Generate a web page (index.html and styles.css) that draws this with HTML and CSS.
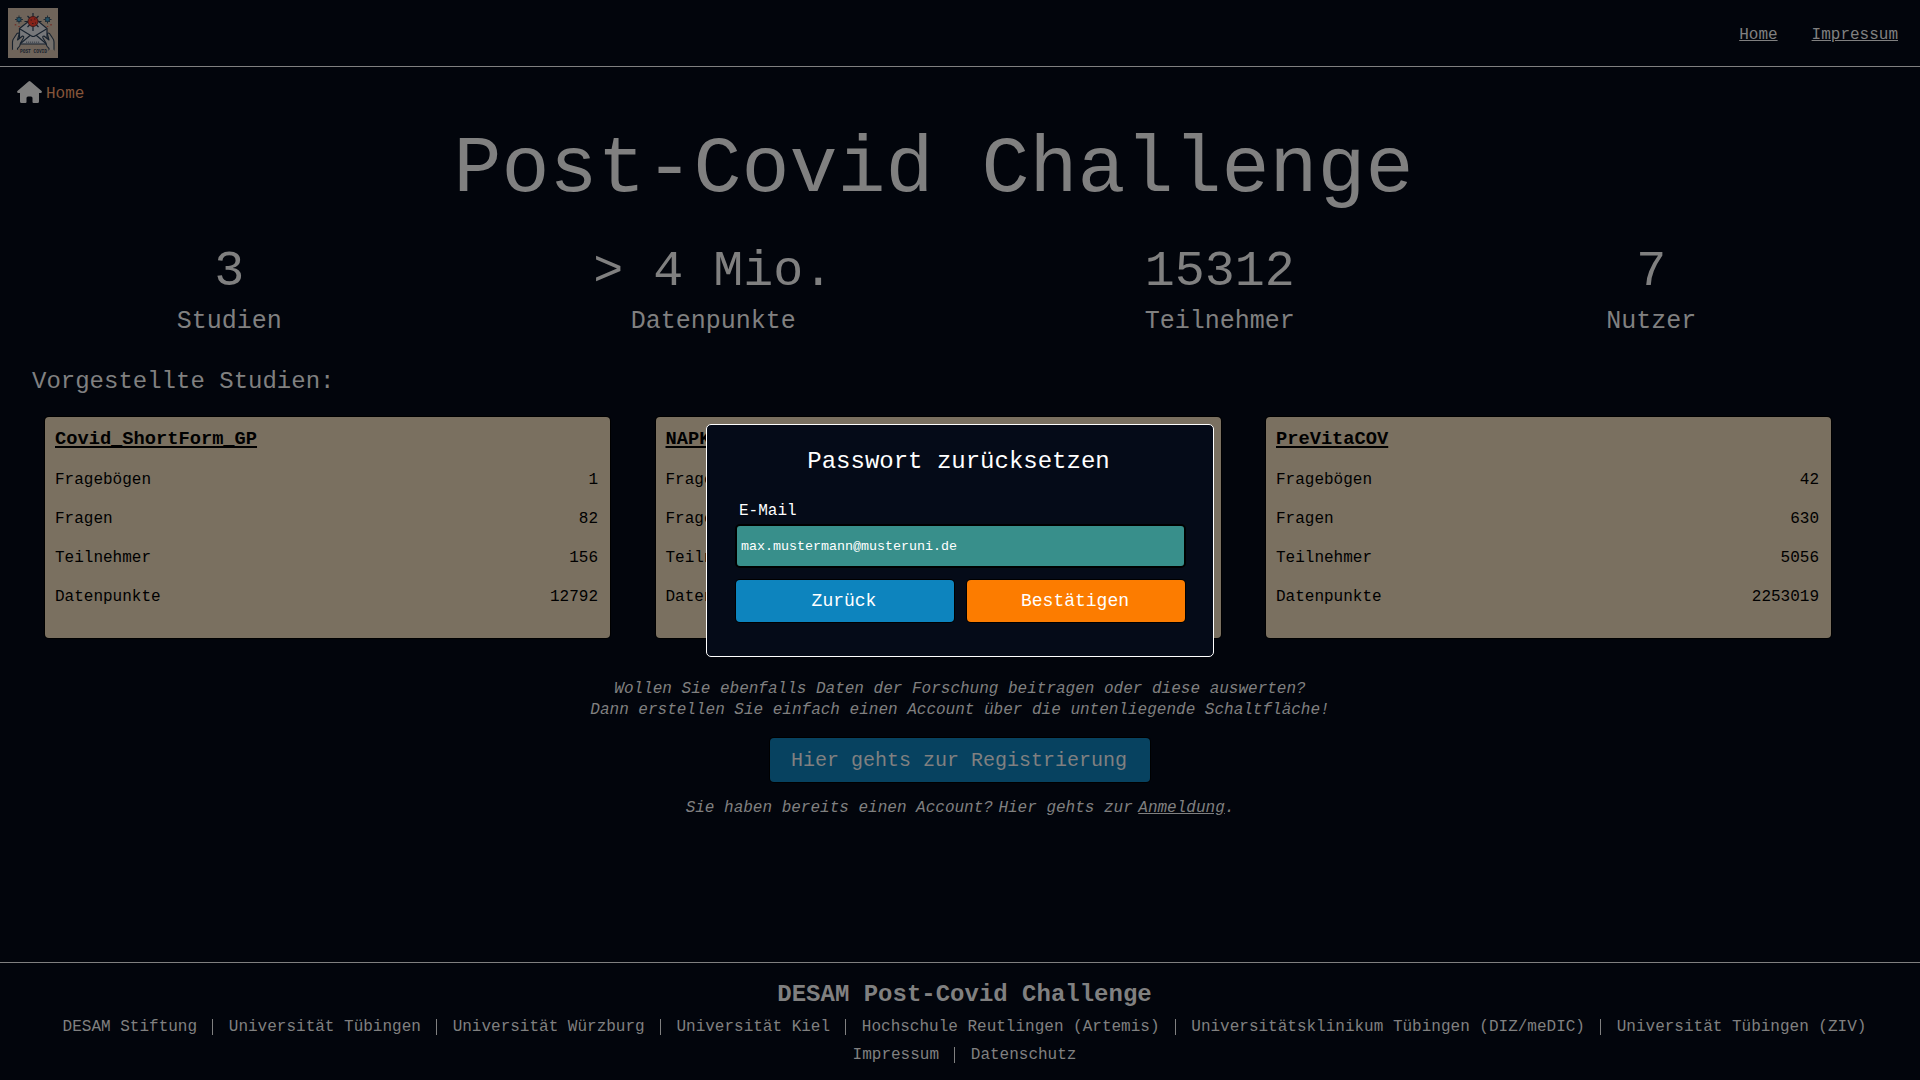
FILE: index.html
```html
<!DOCTYPE html>
<html lang="de">
<head>
<meta charset="utf-8">
<title>Post-Covid Challenge</title>
<link rel="stylesheet" href="styles.css">
</head>
<body>
<header class="topbar">
  <svg class="logo" viewBox="0 0 50 50" role="img" aria-label="Post Covid">
    <rect width="50" height="50" fill="#6f645a"/>
    <g stroke="#1b2833" stroke-width=".9" fill="#245064">
      <path d="M11 7.500v8M7 11.500h8M8.500 9l5 5M13.500 9l-5 5M39.500 7.500v8M35.500 11.500h8M37 9l5 5M42 9l-5 5"/>
      <circle cx="11" cy="11.500" r="2.200"/><circle cx="39.500" cy="11.500" r="2.200"/>
    </g>
    <path d="M11.500 20.500 21 13h9l9 7.500V36H11.500z" fill="#76777a" stroke="#17212d" stroke-width="1.200"/>
    <path d="M12 21l11.500 7q1.700 1 3.400 0L38.500 21M12 36l10-8.500M38.500 36l-10-8.500" fill="none" stroke="#17212d" stroke-width="1.100"/>
    <path d="M18 34.300h14" stroke="#4a4f55" stroke-width="1.400" stroke-dasharray="1.200 .8"/>
    <path d="M25 5v18M16.500 13.500h17M19.500 8l11 11M30.500 8l-11 11" stroke="#17212d" stroke-width="1.200"/>
    <circle cx="25" cy="13.500" r="5" fill="#86231a" stroke="#401b1a"/>
    <path d="M22.500 12h1.500M26 11h1.500M24 15.500h1.500M27 15h1" stroke="#35191a" stroke-width="1.200"/>
    <g fill="#74706c" stroke="#17212d" stroke-width="1.100" stroke-linejoin="round">
      <path d="M4.500 42.500V34q0-2 1.500-4l3-4.500q2-1.500 2 1L9.500 32l5-4q1.800 0 1 2l-3 5q0 3-3 5.500v2z"/>
      <path d="M46 42.500V34q0-2-1.500-4l-3-4.500q-2-1.500-2 1L41 32l-5-4q-1.800 0-1 2l3 5q0 3 3 5.500v2z"/>
    </g>
    <path d="M4 42.500h6M40.500 42.500h6" stroke="#6f645a" stroke-width="1.600"/>
    <path d="M7.500 16v1.500M43 16v1.500M11 18v1M39.500 18v1" stroke="#70322b" stroke-width="1.500"/>
    <text class="logo-text" x="25.500" y="45.300">POST COVID</text>
  </svg>
  <nav class="nav"><a>Home</a><a>Impressum</a></nav>
</header>
<div class="breadcrumb">
  <svg class="house" viewBox="0 0 25 22"><path d="M11.500.4q1-.8 2 0L24.600 10q.8 1-.4 2H22v8.500q0 1.500-1.500 1.500h-4q-1 0-1-1v-4q0-1.500-1.500-1.500h-3q-1.500 0-1.500 1.500v4q0 1-1 1h-4Q3 22 3 20.500V12H.8Q-.4 11 .4 10z"/></svg>
  <span>Home</span>
</div>
<main>
  <section class="hero">
    <h1>Post-Covid Challenge</h1>
    <div class="stats">
      <div class="stat"><b>3</b><span>Studien</span></div>
      <div class="stat"><b>&gt; 4 Mio.</b><span>Datenpunkte</span></div>
      <div class="stat"><b>15312</b><span>Teilnehmer</span></div>
      <div class="stat"><b>7</b><span>Nutzer</span></div>
    </div>
    <h2>Vorgestellte Studien:</h2>
    <div class="cards">
      <article class="card"><h3>Covid_ShortForm_GP</h3>
        <p><span>Fragebögen</span><span>1</span></p><p><span>Fragen</span><span>82</span></p><p><span>Teilnehmer</span><span>156</span></p><p><span>Datenpunkte</span><span>12792</span></p></article>
      <article class="card"><h3>NAPKON</h3>
        <p><span>Fragebögen</span></p><p><span>Fragen</span></p><p><span>Teilnehmer</span></p><p><span>Datenpunkte</span></p></article>
      <article class="card"><h3>PreVitaCOV</h3>
        <p><span>Fragebögen</span><span>42</span></p><p><span>Fragen</span><span>630</span></p><p><span>Teilnehmer</span><span>5056</span></p><p><span>Datenpunkte</span><span>2253019</span></p></article>
    </div>
  </section>
  <section class="signup">
    <p class="pitch">Wollen Sie ebenfalls Daten der Forschung beitragen oder diese auswerten?<br>Dann erstellen Sie einfach einen Account über die untenliegende Schaltfläche!</p>
    <a class="register">Hier gehts zur Registrierung</a>
    <p class="login"><span>Sie haben bereits einen Account?</span><span>Hier gehts zur</span><span><u>Anmeldung</u>.</span></p>
  </section>
</main>
<footer>
  <h4>DESAM Post-Covid Challenge</h4>
  <div class="links"><span>DESAM Stiftung</span><i></i><span>Universität Tübingen</span><i></i><span>Universität Würzburg</span><i></i><span>Universität Kiel</span><i></i><span>Hochschule Reutlingen (Artemis)</span><i></i><span>Universitätsklinikum Tübingen (DIZ/meDIC)</span><i></i><span>Universität Tübingen (ZIV)</span></div>
  <div class="links"><span>Impressum</span><i></i><span>Datenschutz</span></div>
</footer>
<form class="modal">
  <h2 class="modal-title">Passwort zurücksetzen</h2>
  <label for="mail">E-Mail</label>
  <input id="mail" type="text" value="max.mustermann@musteruni.de">
  <div class="actions"><button type="button" class="back">Zurück</button><button type="button" class="confirm">Bestätigen</button></div>
</form>
</body>
</html>
```
FILE: styles.css
```css
* { box-sizing: border-box; }
body {
  margin: 0;
  height: 1080px;
  display: flex;
  flex-direction: column;
  overflow: hidden;
  background: #02050c;
  color: #808080;
  font: 16px/20px "Liberation Mono", monospace;
}
h1, h2, h3, h4, p { margin: 0; font-weight: 400; }
.topbar {
  height: 67px;
  padding: 0 22px 0 8px;
  display: flex;
  justify-content: space-between;
  align-items: center;
  border-bottom: 1px solid #808080;
}
.logo { width: 50px; height: 50px; }
.logo-text { font: bold 4.500px "Liberation Mono", monospace; text-anchor: middle; fill: #17212d; }
.nav { display: flex; gap: 34px; padding-top: 3px; }
.nav a { text-decoration: underline; }
.breadcrumb {
  height: 26px;
  margin: 12px 0 1px 17px;
  display: flex;
  align-items: center;
  gap: 4px;
  color: #85553a;
}
.breadcrumb span { padding-top: 4px; }
.house { width: 25px; height: 22px; fill: #808080; }
main { flex: 1; }
.hero { width: 1832px; margin-left: 20px; }
h1 { height: 124px; padding: 4px 5px 0 0; line-height: 120px; font-size: 80px; text-align: center; }
.stats { display: flex; justify-content: space-around; padding: 12px 0 0 1px; }
.stat { display: flex; flex-direction: column; align-items: center; }
.stat b { font-weight: 400; font-size: 50px; line-height: 60px; }
.stat span { font-size: 25px; line-height: 40px; }
.hero h2 { margin: 24px 0 0 12px; font-size: 24px; line-height: 32px; }
.cards { display: grid; grid-template-columns: repeat(3, 565px); gap: 45.500px; margin: 19px 0 0 25px; }
.card {
  height: 221px;
  padding: 10px 12px 0 10px;
  background: #7a7060;
  border-radius: 4px;
  box-shadow: 0 0 0 1px #000;
  color: #000;
}
.card h3 {
  margin-bottom: 10px;
  font-size: 18.720px;
  line-height: 24px;
  font-weight: 700;
  text-decoration: underline 2px;
  text-underline-offset: 2px;
  text-decoration-skip-ink: none;
}
.card p { display: flex; justify-content: space-between; line-height: 39px; }
.signup { display: flex; flex-direction: column; align-items: center; }
.pitch { margin-top: 41px; line-height: 21px; font-style: italic; text-align: center; }
.register {
  width: 380px;
  height: 44px;
  margin-top: 17px;
  padding: 1px 2px 0 0;
  line-height: 44px;
  font-size: 20px;
  text-align: center;
  background: #074260;
  border-radius: 4px;
  box-shadow: 0 0 0 1px #000;
}
.login { display: flex; gap: 5.500px; margin-top: 16px; font-style: italic; }
footer { height: 118px; padding-top: 18px; border-top: 1px solid #808080; text-align: center; }
footer h4 { padding-left: 9px; font-size: 24px; line-height: 28px; font-weight: 700; }
.links { display: flex; justify-content: center; align-items: center; height: 28px; padding-top: 8px; margin-left: 9px; }
.links i { width: 1px; height: 16px; margin: 0 15.400px; background: #808080; }
.modal {
  position: absolute;
  left: 706px;
  top: 424px;
  width: 508px;
  height: 233px;
  padding: 21px 27px 20px 28px;
  display: flex;
  flex-direction: column;
  background: #050b18;
  border: 1px solid #fff;
  border-radius: 5px;
  color: #fff;
}
.modal-title { padding-right: 4px; font-size: 24px; line-height: 32px; text-align: center; }
.modal label { margin: 23px 0 3px 4px; line-height: 20px; }
.modal input {
  height: 44px;
  padding: 0 4px;
  background: #388f8b;
  border: 2px solid #000;
  border-radius: 5px;
  color: #fff;
  font: 13.333px "Liberation Mono", monospace;
}
.actions { display: grid; grid-template-columns: 1fr 1fr; gap: 13px; margin-top: 12px; padding: 0 1px; }
.actions button {
  height: 42px;
  padding: 0 2px 0 0;
  border: 0;
  border-radius: 4px;
  box-shadow: 0 0 0 1px #000;
  color: #fff;
  font: 18px "Liberation Mono", monospace;
}
.back { background: #0d84be; }
.confirm { background: #fc7c00; }
```
